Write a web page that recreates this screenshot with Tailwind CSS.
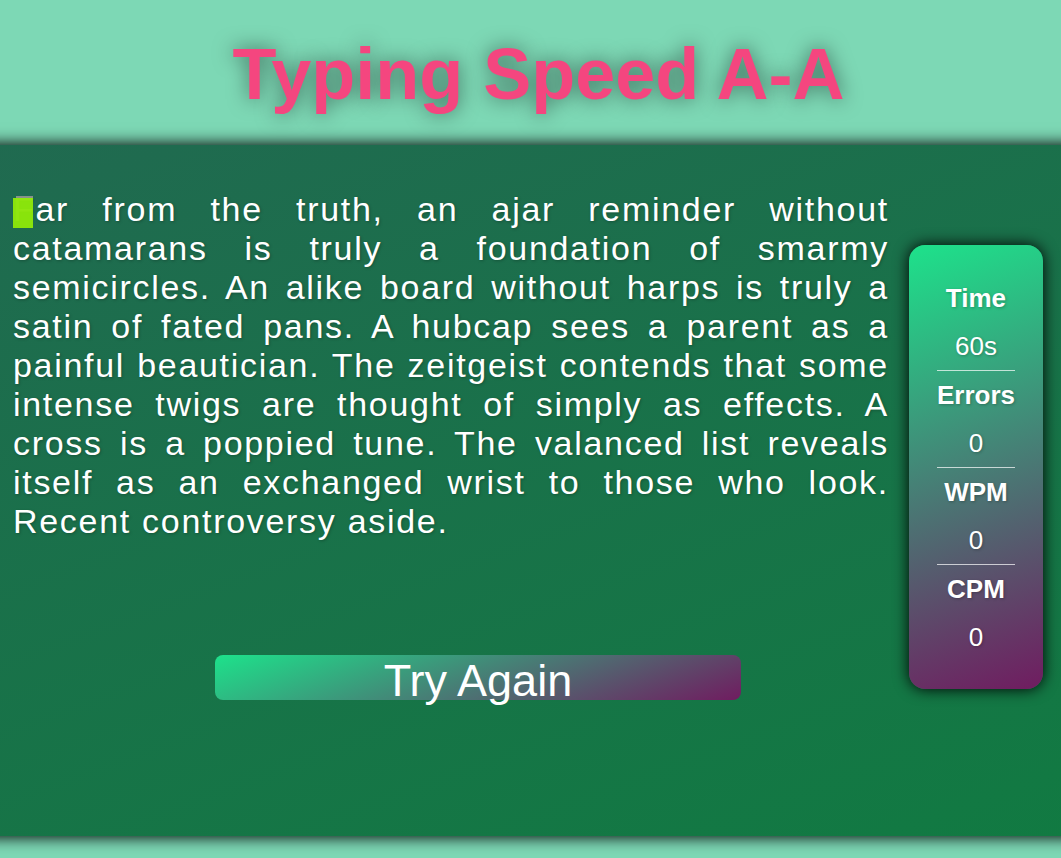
<!DOCTYPE html>
<html lang="en">
<head>
<meta charset="utf-8">
<meta name="viewport" content="width=device-width, initial-scale=1">
<title>Typing Speed A-A</title>
<script src="https://cdn.jsdelivr.net/npm/@tailwindcss/browser@4"></script>
</head>
<body class="flex min-h-screen flex-col overflow-x-hidden bg-[#7dd8b5] font-['Liberation_Sans',Arial,sans-serif] text-white">
  <header class="pt-[34px] pb-[31px] pl-4 text-center">
    <h1 class="text-7xl leading-[80px] font-bold text-[#f4467f] [text-shadow:0_0_20px_rgb(0_0_0/0.5)]">Typing Speed A-A</h1>
  </header>
  <main class="-mx-5 flex grow items-center gap-5 bg-linear-160/srgb from-[#206a50] to-[#117a42] pr-[38px] pl-[33px] shadow-[0_0_15px_1px_#000]">
    <section class="flex grow flex-col items-center self-stretch pt-[45px]">
      <p class="text-justify text-[34px] leading-[39px] tracking-wider [text-shadow:1px_1px_3px_rgb(0_0_0/0.25)]"><span class="relative text-[#999]">F<span class="absolute top-2 left-0 h-[30px] w-5 bg-[#8fea08]/95 before:absolute before:-top-0.5 before:left-[3px] before:h-0.5 before:w-[17px] before:bg-[#88928a]"></span></span>ar from the truth, an ajar reminder without catamarans is truly a foundation of smarmy semicircles. An alike board without harps is truly a satin of fated pans. A hubcap sees a parent as a painful beautician. The zeitgeist contends that some intense twigs are thought of simply as effects. A cross is a poppied tune. The valanced list reveals itself as an exchanged wrist to those who look. Recent controversy aside.</p>
      <button type="button" class="mt-[114px] ml-[54px] flex h-[45px] w-3/5 items-start justify-center rounded-lg bg-linear-160/srgb from-[#1de28b] to-[#701c60] text-[45px] leading-[51px]">Try Again</button>
    </section>
    <aside class="mt-[-47px] flex shrink-0 flex-col rounded-2xl bg-linear-160/srgb from-[#1de28b] to-[#701c60] px-7 pt-[29px] pb-7 text-center text-[26px] leading-[48px] shadow-[0_0_15px_#000] [text-shadow:1px_1px_3px_rgb(0_0_0/0.25)]">
      <dl class="divide-y divide-white/70">
        <div><dt class="font-bold">Time</dt><dd>60s</dd></div>
        <div><dt class="font-bold">Errors</dt><dd>0</dd></div>
        <div><dt class="font-bold">WPM</dt><dd>0</dd></div>
        <div><dt class="font-bold">CPM</dt><dd>0</dd></div>
      </dl>
    </aside>
  </main>
  <footer class="h-[22px]"></footer>
</body>
</html>
